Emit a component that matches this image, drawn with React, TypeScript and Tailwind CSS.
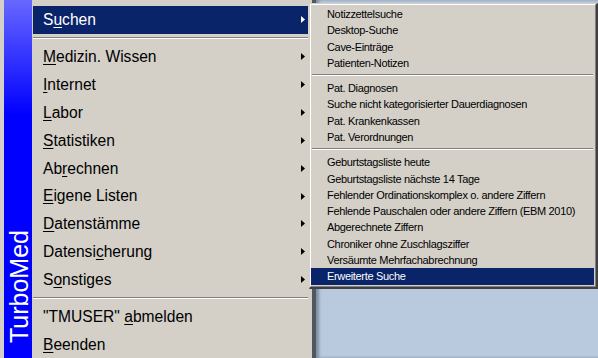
import React from "react";

type Entry = { pre: string; key: string; post: string; sub?: boolean } | "sep";

const mainItems: Entry[] = [
  { pre: "S", key: "u", post: "chen", sub: true },
  "sep",
  { pre: "", key: "M", post: "edizin. Wissen", sub: true },
  { pre: "", key: "I", post: "nternet", sub: true },
  { pre: "", key: "L", post: "abor", sub: true },
  { pre: "", key: "S", post: "tatistiken", sub: true },
  { pre: "Ab", key: "r", post: "echnen", sub: true },
  { pre: "", key: "E", post: "igene Listen", sub: true },
  { pre: "", key: "D", post: "atenstämme", sub: true },
  { pre: "Datensi", key: "c", post: "herung", sub: true },
  { pre: "S", key: "o", post: "nstiges", sub: true },
  "sep",
  { pre: '"TMUSER" ', key: "a", post: "bmelden" },
  { pre: "", key: "B", post: "eenden" },
];

const subGroups: string[][] = [
  ["Notizzettelsuche", "Desktop-Suche", "Cave-Einträge", "Patienten-Notizen"],
  [
    "Pat. Diagnosen",
    "Suche nicht kategorisierter Dauerdiagnosen",
    "Pat. Krankenkassen",
    "Pat. Verordnungen",
  ],
  [
    "Geburtstagsliste heute",
    "Geburtstagsliste nächste 14 Tage",
    "Fehlender Ordinationskomplex o. andere Ziffern",
    "Fehlende Pauschalen oder andere Ziffern (EBM 2010)",
    "Abgerechnete Ziffern",
    "Chroniker ohne Zuschlagsziffer",
    "Versäumte Mehrfachabrechnung",
    "Erweiterte Suche",
  ],
];

function Arrow({ white }: { white?: boolean }) {
  return (
    <svg width="4" height="7" viewBox="0 0 4 7" className="shrink-0">
      <polygon points="0,0 4,3.5 0,7" fill={white ? "#ffffff" : "#000000"} />
    </svg>
  );
}

function Separator({ h, line }: { h: string; line: string }) {
  return (
    <div className={`${h} ${line}`}>
      <div className="h-px bg-[#808080]" />
      <div className="h-px bg-white" />
    </div>
  );
}

function MainItem({ item, active }: { item: Exclude<Entry, "sep">; active: boolean }) {
  return (
    <div
      className={`h-[27.9px] flex items-center justify-between pl-[10px] pr-[3px] ${
        active ? "bg-[#0a246a] text-white" : "text-black"
      }`}
    >
      <span className="whitespace-pre">
        {item.pre}
        <span className="underline decoration-1 underline-offset-[2px]">{item.key}</span>
        {item.post}
      </span>
      {item.sub && <Arrow white={active} />}
    </div>
  );
}

export default function App() {
  return (
    <div
      className="w-[598px] h-[358px] overflow-hidden relative flex bg-[#b9c9de]"
      style={{ fontFamily: '"Liberation Sans", Arial, sans-serif' }}
    >
      {/* Hauptmenü */}
      <div className="w-[312px] h-full flex bg-[#d4d0c8] pl-[4px] pr-[4px]">
        <div className="w-[28px] h-full flex flex-col justify-end items-center pb-[15px] bg-[linear-gradient(to_bottom,#6767ff_0px,#0000ff_115px,#0000ff_100%)]">
          <span className="text-white text-[25px] leading-none [writing-mode:vertical-rl] rotate-180 ml-[2px]">
            TurboMed
          </span>
        </div>
        <div className="flex-1 ml-[1px] pt-[6px] text-[15.6px]">
          {mainItems.map((it, i) =>
            it === "sep" ? (
              <Separator key={i} h="h-[8.8px]" line="pt-[3px]" />
            ) : (
              <MainItem key={i} item={it} active={i === 0} />
            )
          )}
        </div>
      </div>

      {/* Fenster dahinter */}
      <div className="flex-1 h-full border-l-[4px] border-[#4f5761] shadow-[inset_3px_0_3px_#7f8ea3] bg-[#b9c9de]" />

      {/* Untermenü Suchen */}
      <div className="absolute left-[309px] top-[3px] w-[289px] border-t border-l border-t-[#d4d0c8] border-l-[#d4d0c8] border-r-2 border-b-2 border-r-[#404040] border-b-[#404040]">
        <div className="border-t border-l border-t-white border-l-white border-r border-b border-r-[#808080] border-b-[#808080] bg-[#d4d0c8] pt-px pb-px pr-px text-[11px] tracking-[-0.33px]">
          {subGroups.map((group, gi) => (
            <div key={gi}>
              {gi > 0 && <Separator h="h-[9px]" line="pt-[3px] px-px" />}
              {group.map((label) => {
                const active = label === "Erweiterte Suche";
                return (
                  <div
                    key={label}
                    className={`h-[16.3px] flex items-center pl-[16px] whitespace-nowrap ${
                      active ? "bg-[#0a246a] text-white" : "text-black"
                    }`}
                  >
                    {label}
                  </div>
                );
              })}
            </div>
          ))}
        </div>
      </div>
    </div>
  );
}
